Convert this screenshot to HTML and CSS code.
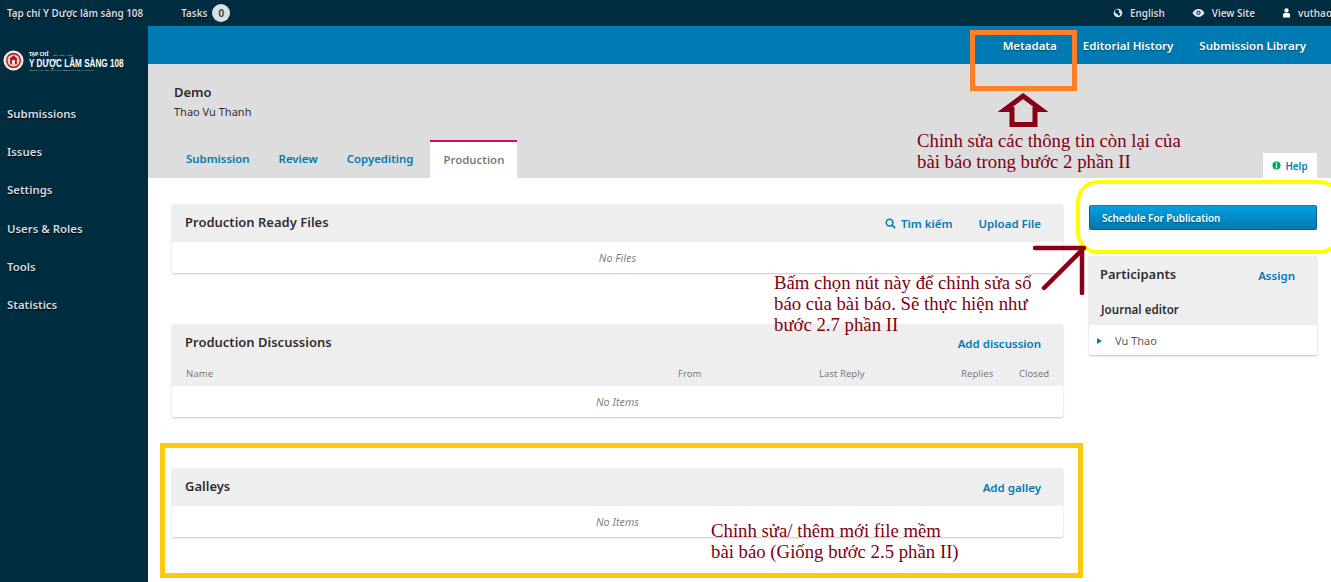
FILE: index.html
```html
<!DOCTYPE html>
<html lang="vi">
<head>
    <meta charset="UTF-8">
    <meta name="viewport" content="width=device-width, initial-scale=1.0">
    <title>Production - Demo</title>
    <link rel="stylesheet" href="styles.css">
</head>
<body>

    <!-- top bar -->
    <header class="topbar">
        <div class="topbar-left">
            <a class="site-name">Tạp chí Y Dược lâm sàng 108</a>
            <a class="tasks">Tasks <span class="task-count">0</span></a>
        </div>
        <div class="topbar-right">
            <a class="top-link">
                <svg class="top-icon" viewBox="0 0 12 12"><circle cx="6" cy="6" r="5.2" fill="#dfe5e8"/><path d="M4 1.5 7.5 3 7 5.5 9 7 7 10 5.5 7.5 3 6 2 4z" fill="#002c40"/></svg>
                English
            </a>
            <a class="top-link">
                <svg class="top-icon eye" viewBox="0 0 14 10"><path d="M0.5 5C2.5 1.8 4.6 .8 7 .8S11.500 1.800 13.500 5C11.500 8.200 9.400 9.200 7 9.200S2.500 8.200 .5 5z" fill="#dfe5e8"/><circle cx="7" cy="4.800" r="2.300" fill="#002c40"/><circle cx="7" cy="4.800" r="1.200" fill="#dfe5e8"/></svg>
                View Site
            </a>
            <a class="top-link">
                <svg class="top-icon user" viewBox="0 0 10 12"><circle cx="5" cy="3" r="2.600" fill="#fff"/><path d="M.8 11.500V8.300C.8 6.800 2 6 3.200 6h3.600C8 6 9.200 6.800 9.200 8.300v3.200z" fill="#fff"/></svg>
                vuthao
            </a>
        </div>
    </header>

    <div class="layout">
        <!-- left menu -->
        <nav class="sidebar">
            <div class="logo">
                <svg class="logo-mark" viewBox="0 0 22 22">
                    <circle cx="11" cy="11" r="10.500" fill="#f1efe6"/>
                    <circle cx="11" cy="11" r="8" fill="#c5202c"/>
                    <circle cx="11" cy="11" r="6.300" fill="#e8d9c8"/>
                    <path d="M11 5.500 15.500 9.500H14.500V15H7.500V9.500H6.500z" fill="#b5161f"/>
                    <path d="M9.500 10.500h3V15h-3z" fill="#f1efe6"/>
                </svg>
                <div class="logo-text">
                    <span class="logo-small">TẠP CHÍ <span class="logo-issn">ISSN 1859 - 1663</span></span>
                    <span class="logo-big">Y DƯỢC LÂM SÀNG 108</span>
                    <span class="logo-sub">JOURNAL OF 108 - CLINICAL MEDICINE AND PHARMACY</span>
                </div>
            </div>
            <ul class="menu">
                <li>Submissions</li>
                <li>Issues</li>
                <li>Settings</li>
                <li>Users &amp; Roles</li>
                <li>Tools</li>
                <li>Statistics</li>
            </ul>
        </nav>

        <main class="main">
            <div class="bluebar">
                <a class="current">Metadata</a>
                <a>Editorial History</a>
                <a>Submission Library</a>
            </div>

            <div class="page-head">
                <h1 class="page-title">Demo</h1>
                <div class="page-author">Thao Vu Thanh</div>
                <div class="tabs-row">
                    <div class="tabs">
                        <a class="tab">Submission</a>
                        <a class="tab">Review</a>
                        <a class="tab">Copyediting</a>
                        <a class="tab active">Production</a>
                    </div>
                    <a class="help">
                        <svg class="help-icon" viewBox="0 0 10 10"><circle cx="5" cy="5" r="4.500" fill="#00a65a"/><rect x="4.200" y="1.800" width="1.600" height="1.500" fill="#fff"/><rect x="4.200" y="4" width="1.600" height="4" fill="#fff"/></svg>
                        Help
                    </a>
                </div>
            </div>

            <div class="content">
                <div class="col-left">
                    <section class="panel">
                        <div class="panel-head">
                            <h2>Production Ready Files</h2>
                            <div class="panel-actions">
                                <a>
                                    <svg class="search-icon" viewBox="0 0 12 12"><circle cx="5" cy="5" r="3.700" fill="none" stroke="#007ab2" stroke-width="1.600"/><path d="M7.800 7.800 11 11" stroke="#007ab2" stroke-width="1.900"/></svg>
                                    Tìm kiếm
                                </a>
                                <a>Upload File</a>
                            </div>
                        </div>
                        <div class="panel-empty">No Files</div>
                    </section>

                    <section class="panel">
                        <div class="panel-head">
                            <h2>Production Discussions</h2>
                            <div class="panel-actions"><a>Add discussion</a></div>
                        </div>
                        <div class="columns">
                            <span class="col-name">Name</span>
                            <span class="col-from">From</span>
                            <span class="col-last">Last Reply</span>
                            <span class="col-replies">Replies</span>
                            <span class="col-closed">Closed</span>
                        </div>
                        <div class="panel-empty">No Items</div>
                    </section>

                    <section class="panel">
                        <div class="panel-head">
                            <h2>Galleys</h2>
                            <div class="panel-actions"><a>Add galley</a></div>
                        </div>
                        <div class="panel-empty">No Items</div>
                    </section>
                </div>

                <aside class="col-right">
                    <a class="schedule-btn">Schedule For Publication</a>
                    <section class="participants">
                        <div class="participants-head">
                            <h2>Participants</h2>
                            <a>Assign</a>
                        </div>
                        <div class="role">Journal editor</div>
                        <div class="person"><span class="arrow"></span>Vu Thao</div>
                    </section>
                </aside>
            </div>
        </main>
    </div>

    <!-- annotations drawn on top of the screenshot -->
    <div class="box box-orange"></div>
    <div class="box box-gold"></div>
    <div class="box box-yellow"></div>

    <svg class="arrows" viewBox="0 0 1331 582">
        <path d="M1023 96 1041 109.500H1035V124.500H1012V109.500H1005z" fill="none" stroke="#880015" stroke-width="5"/>
        <path d="M1035 248H1084M1083 249 1044 288M1082 250V293" fill="none" stroke="#880015" stroke-width="4.500" stroke-linecap="round"/>
    </svg>

    <p class="note note-meta">Chỉnh sửa các thông tin còn lại của<br>bài báo trong bước 2 phần II</p>
    <p class="note note-issue">Bấm chọn nút này để chỉnh sửa số<br>báo của bài báo. Sẽ thực hiện như<br>bước 2.7 phần II</p>
    <p class="note note-galley">Chỉnh sửa/ thêm mới file mềm<br>bài báo (Giống bước 2.5 phần II)</p>

</body>
</html>
```

FILE: styles.css
```css
html, body {
    margin: 0;
    height: 582px;
    overflow: hidden;
}

body {
    position: relative;
    background-color: #fff;
    font-family: "Noto Sans", Arial, sans-serif;
    font-size: 11px;
    color: rgba(0, 0, 0, 0.84);
}

a {
    color: #007ab2;
    font-weight: 600;
}

/* top bar */
.topbar {
    display: flex;
    justify-content: space-between;
    align-items: center;
    height: 26px;
    background-color: #002c40;
    font-size: 9.900px;
    text-shadow: 0 1px 1px #000;
}

.topbar a {
    color: #d5dde1;
}

.topbar-left {
    display: flex;
    align-items: center;
    padding-left: 7px;
}

.tasks {
    display: flex;
    align-items: center;
    gap: 5px;
    margin-left: 38px;
}

.task-count {
    width: 18px;
    height: 18px;
    border-radius: 50%;
    background-color: #dbe0e3;
    color: #333;
    text-align: center;
    line-height: 18px;
    text-shadow: none;
}

.topbar-right {
    display: flex;
    align-items: center;
    gap: 27px;
    margin-right: -1px;
}

.top-link {
    display: flex;
    align-items: center;
    gap: 7px;
}

.top-icon {
    width: 10px;
    height: 10px;
}

.top-icon.eye {
    width: 13px;
}

.top-icon.user {
    width: 9px;
}

/* page frame */
.layout {
    display: flex;
    height: 556px;
}

.sidebar {
    width: 148px;
    flex-shrink: 0;
    background-color: #002c40;
}

.logo {
    display: flex;
    align-items: center;
    gap: 5px;
    height: 21px;
    padding: 24px 0 0 3px;
}

.logo-mark {
    width: 21px;
    height: 21px;
    flex-shrink: 0;
}

.logo-text {
    display: flex;
    flex-direction: column;
    width: 95px;
    margin-top: 2px;
    color: #fff;
    font-weight: 700;
    white-space: nowrap;
}

.logo-small {
    font-size: 5px;
    line-height: 6px;
}

.logo-issn {
    margin-left: 3px;
    font-size: 2.500px;
    font-weight: 400;
    color: #b8c4ca;
}

.logo-big {
    font-family: "Liberation Sans", Arial, sans-serif;
    font-size: 11px;
    line-height: 11px;
    transform: scaleX(0.74);
    transform-origin: left;
}

.logo-sub {
    font-size: 2.500px;
    line-height: 3px;
    font-weight: 400;
    color: #b8c4ca;
}

.menu {
    list-style: none;
    margin: 24px 0 0;
    padding: 0;
    color: #d5dde1;
    font-size: 11.400px;
    font-weight: 600;
    text-shadow: 0 1px 1px #000;
}

.menu li {
    height: 38.200px;
    line-height: 38px;
    padding-left: 7px;
}

.main {
    flex: 1;
    min-width: 0;
}

.bluebar {
    display: flex;
    justify-content: flex-end;
    align-items: center;
    gap: 26px;
    height: 38px;
    padding-right: 25px;
    background-color: #007ab2;
    font-size: 11.500px;
}

.bluebar a {
    color: #fff;
    text-shadow: 0 1px 1px rgba(0, 0, 0, 0.4);
}

/* gray header with tabs */
.page-head {
    height: 114px;
    padding: 0 14px 0 25px;
    background-color: #ddd;
    box-sizing: border-box;
}

.page-title {
    margin: 0;
    padding: 19px 0 0 1px;
    font-size: 13px;
    line-height: 18px;
    font-weight: 600;
}

.page-author {
    margin-top: 3px;
    padding-left: 1px;
    line-height: 16px;
    font-size: 11px;
}

.tabs-row {
    display: flex;
    justify-content: space-between;
    align-items: flex-end;
    height: 38px;
    margin-top: 20px;
}

.tabs {
    display: flex;
    align-self: stretch;
}

.tab {
    display: flex;
    align-items: center;
    padding: 0 13px 2px;
    margin-right: 3px;
    font-size: 11.400px;
}

.tab.active {
    width: 87px;
    margin: 0 0 0 1px;
    box-sizing: border-box;
    background-color: #fff;
    border-top: 2px solid #d00a6c;
    color: rgba(0, 0, 0, 0.54);
}

.help {
    display: flex;
    align-items: center;
    justify-content: center;
    gap: 4px;
    width: 54px;
    height: 25px;
    background-color: #fff;
    font-size: 9.900px;
}

.help-icon {
    width: 9px;
    height: 9px;
}

/* content columns */
.content {
    display: flex;
    padding: 26px 14px 0 24px;
}

.col-left {
    display: flex;
    flex-direction: column;
    gap: 51px;
    width: 891px;
}

.col-right {
    width: 228px;
    margin-left: 26px;
}

.panel {
    border-radius: 2px;
    box-shadow: 0 1px 2px rgba(0, 0, 0, 0.22);
}

.panel-head {
    display: flex;
    justify-content: space-between;
    align-items: center;
    height: 38px;
    padding: 0 22px 0 13px;
    background-color: #eee;
    border-radius: 2px 2px 0 0;
}

.panel-head h2 {
    margin: 0;
    font-size: 13px;
    font-weight: 600;
    position: relative;
    top: -1px;
}

.panel-actions {
    display: flex;
    gap: 26px;
    font-size: 11.500px;
    padding-top: 1px;
}

.panel-actions a {
    display: flex;
    align-items: center;
    gap: 5px;
}

.search-icon {
    width: 11px;
    height: 11px;
}

.panel-empty {
    height: 31px;
    line-height: 32px;
    text-align: center;
    font-size: 10.800px;
    font-style: italic;
    color: rgba(0, 0, 0, 0.54);
}

.columns {
    display: flex;
    align-items: center;
    height: 23px;
    padding-bottom: 1px;
    background-color: #eee;
    font-size: 9.600px;
    color: rgba(0, 0, 0, 0.54);
}

.col-name {
    margin-left: 14px;
    width: 492px;
}

.col-from {
    width: 141px;
}

.col-last {
    width: 142px;
}

.col-replies {
    width: 58px;
}

/* right column */
.schedule-btn {
    display: block;
    height: 25px;
    margin-top: 1px;
    padding-left: 12px;
    line-height: 24px;
    box-sizing: border-box;
    background: linear-gradient(#00a0e0, #0079b0);
    border: 1px solid #00628f;
    border-top-color: #0086c2;
    border-radius: 2px;
    color: #fff;
    font-size: 9.900px;
    text-shadow: 0 1px 1px rgba(0, 0, 0, 0.4);
}

.participants {
    margin-top: 26px;
    border-radius: 2px;
    box-shadow: 0 1px 2px rgba(0, 0, 0, 0.25);
}

.participants-head {
    display: flex;
    justify-content: space-between;
    height: 38px;
    padding: 9px 22px 0 11px;
    box-sizing: border-box;
    background-color: #eee;
}

.participants-head h2 {
    margin: 0;
    font-size: 13px;
    line-height: 18px;
    font-weight: 600;
}

.participants-head a {
    font-size: 11.500px;
    line-height: 21px;
}

.role {
    height: 31px;
    padding-left: 12px;
    line-height: 32px;
    background-color: #eee;
    font-size: 11.600px;
    font-weight: 600;
}

.person {
    display: flex;
    align-items: center;
    height: 30px;
    padding: 1px 0 0 8px;
    box-sizing: border-box;
    font-size: 11px;
    color: rgba(0, 0, 0, 0.7);
}

.arrow {
    width: 0;
    height: 0;
    margin-right: 13px;
    border-left: 5px solid #007ab2;
    border-top: 3px solid transparent;
    border-bottom: 3px solid transparent;
}

/* annotations */
.box {
    position: absolute;
    box-sizing: border-box;
}

.box-orange {
    left: 970px;
    top: 30px;
    width: 107px;
    height: 61px;
    border: 5px solid #ff7f27;
}

.box-gold {
    left: 160px;
    top: 443px;
    width: 923px;
    height: 135px;
    border: 5px solid #ffc90e;
}

.box-yellow {
    left: 1076px;
    top: 180px;
    width: 266px;
    height: 74px;
    border: 4px solid #ff0;
    border-radius: 22px;
}

.arrows {
    position: absolute;
    left: 0;
    top: 0;
    width: 1331px;
    height: 582px;
}

.note {
    position: absolute;
    margin: 0;
    font-family: "Liberation Serif", "Times New Roman", serif;
    font-size: 18.750px;
    line-height: 21px;
    color: #7f0012;
    white-space: nowrap;
}

.note-meta {
    left: 917px;
    top: 130px;
}

.note-issue {
    left: 774px;
    top: 272px;
}

.note-galley {
    left: 711px;
    top: 520px;
}
```
